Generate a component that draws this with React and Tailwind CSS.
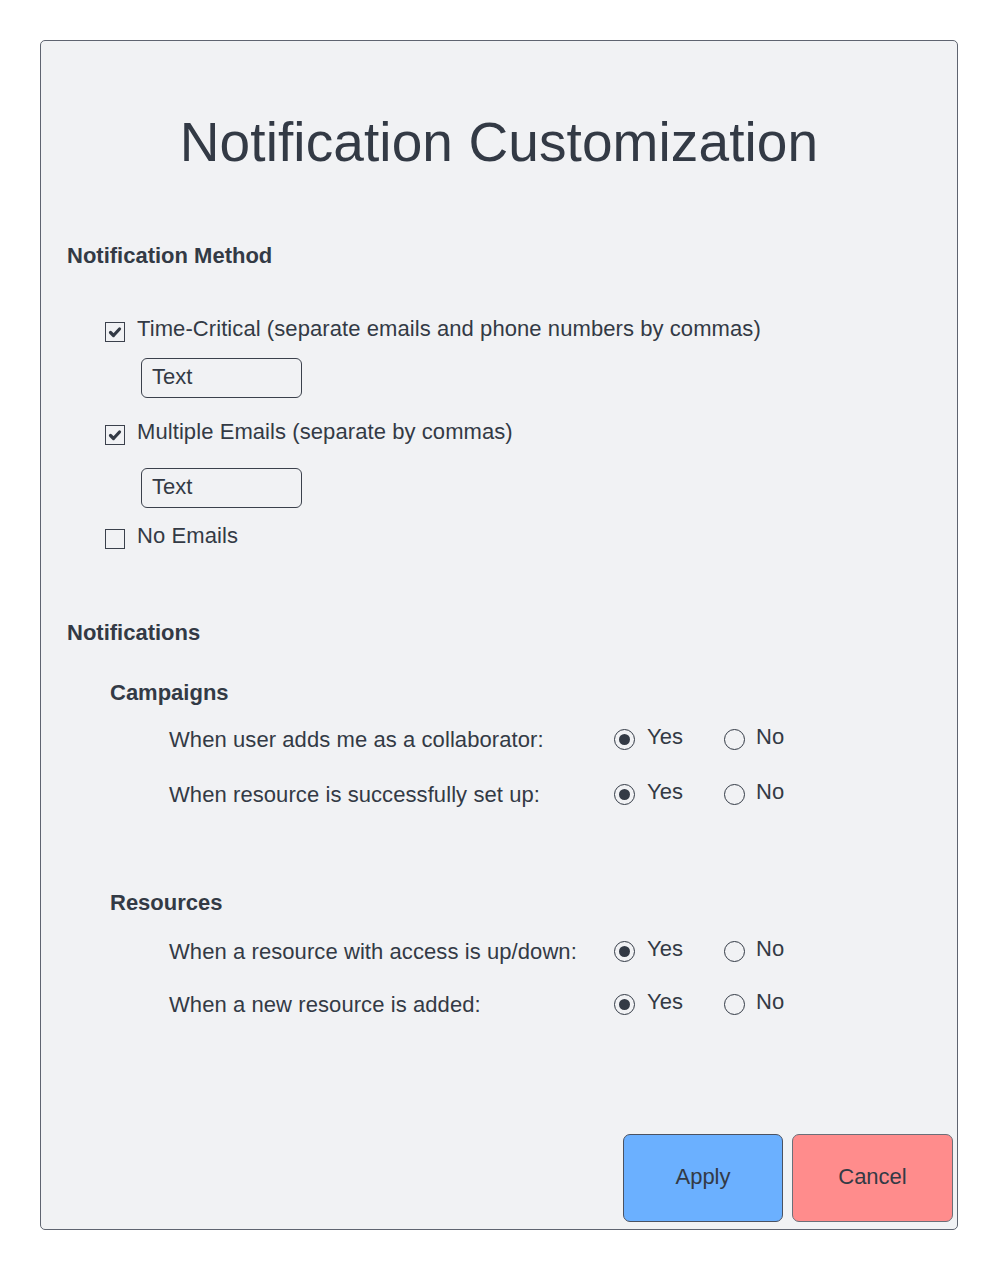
import React, { useState } from "react";

const Checkbox = ({ checked, onClick }) => (
  <button
    type="button"
    onClick={onClick}
    className="w-[20px] h-[20px] border border-[#3b414c] bg-[#f1f2f4] flex items-center justify-center shrink-0"
  >
    {checked && (
      <svg width="16" height="16" viewBox="0 0 16 16">
        <path
          d="M3.5 8.5 L6.5 11.5 L12.5 5"
          fill="none"
          stroke="#333a45"
          strokeWidth="3.2"
          strokeLinecap="round"
          strokeLinejoin="round"
        />
      </svg>
    )}
  </button>
);

const Radio = ({ checked, onClick }) => (
  <button
    type="button"
    onClick={onClick}
    className="w-[21px] h-[21px] rounded-full border-[1.5px] border-[#333a45] bg-[#f1f2f4] flex items-center justify-center shrink-0"
  >
    {checked && <span className="w-[11px] h-[11px] rounded-full bg-[#333a45]" />}
  </button>
);

const CheckRow = ({ label, checked, onClick, className }) => (
  <div className={`flex items-center ml-[38px] ${className}`}>
    <div className="mt-[5px]">
      <Checkbox checked={checked} onClick={onClick} />
    </div>
    <span className="ml-[12px] leading-[26px] tracking-[0.08px]">{label}</span>
  </div>
);

const TextBox = ({ className }) => (
  <div
    className={`ml-[74px] w-[161px] h-[40px] border border-[#3b414c] rounded-[6px] pl-[10px] pb-[3px] flex items-center leading-[26px] ${className}`}
  >
    Text
  </div>
);

const ChoiceRow = ({ label, value, onChange, className }) => (
  <div className={`flex ml-[102px] ${className}`}>
    <span className="w-[445px] leading-[26px] tracking-[0.08px]">{label}</span>
    <div className="flex items-start w-[110px]">
      <div className="mt-[2px]">
        <Radio checked={value} onClick={() => onChange(true)} />
      </div>
      <span className="ml-[12px] leading-[26px] -mt-[3px]">Yes</span>
    </div>
    <div className="flex items-start">
      <div className="mt-[2px]">
        <Radio checked={!value} onClick={() => onChange(false)} />
      </div>
      <span className="ml-[11px] leading-[26px] -mt-[3px]">No</span>
    </div>
  </div>
);

const App = () => {
  const [timeCritical, setTimeCritical] = useState(true);
  const [multiple, setMultiple] = useState(true);
  const [noEmails, setNoEmails] = useState(false);
  const [choices, setChoices] = useState([true, true, true, true]);

  const setChoice = (i) => (v) =>
    setChoices((prev) => prev.map((c, j) => (j === i ? v : c)));

  return (
    <div className="w-full min-h-[1271px] bg-white pt-[40px] pl-[40px] font-['Liberation_Sans',Arial,sans-serif] text-[22px] text-[#333a45]">
      <div className="w-[918px] h-[1190px] border border-[#5f6470] rounded-[5px] bg-[#f1f2f4] flex flex-col pl-[26px]">
        {/* Title */}
        <h1 className="mt-[69px] -ml-[26px] text-center text-[55px] leading-[64px] tracking-[0.1px]">
          Notification Customization
        </h1>

        {/* Notification Method */}
        <h2 className="mt-[69px] font-bold leading-[26px]">Notification Method</h2>

        <CheckRow
          className="mt-[47px]"
          label="Time-Critical (separate emails and phone numbers by commas)"
          checked={timeCritical}
          onClick={() => setTimeCritical(!timeCritical)}
        />
        <TextBox className="mt-[16px]" />

        <CheckRow
          className="mt-[21px]"
          label="Multiple Emails (separate by commas)"
          checked={multiple}
          onClick={() => setMultiple(!multiple)}
        />
        <TextBox className="mt-[23px]" />

        <CheckRow
          className="mt-[15px]"
          label="No Emails"
          checked={noEmails}
          onClick={() => setNoEmails(!noEmails)}
        />

        {/* Notifications */}
        <h2 className="mt-[71px] font-bold leading-[26px]">Notifications</h2>

        <h3 className="mt-[34px] ml-[43px] font-bold leading-[26px]">Campaigns</h3>
        <ChoiceRow
          className="mt-[21px]"
          label="When user adds me as a collaborator:"
          value={choices[0]}
          onChange={setChoice(0)}
        />
        <ChoiceRow
          className="mt-[29px]"
          label="When resource is successfully set up:"
          value={choices[1]}
          onChange={setChoice(1)}
        />

        <h3 className="mt-[82px] ml-[43px] font-bold leading-[26px]">Resources</h3>
        <ChoiceRow
          className="mt-[23px]"
          label="When a resource with access is up/down:"
          value={choices[2]}
          onChange={setChoice(2)}
        />
        <ChoiceRow
          className="mt-[27px]"
          label="When a new resource is added:"
          value={choices[3]}
          onChange={setChoice(3)}
        />

        {/* Buttons */}
        <div className="mt-auto mb-[7px] mr-[4px] flex justify-end gap-[9px]">
          <button
            type="button"
            className="w-[160px] h-[88px] pb-[4px] rounded-[7px] border border-[#4b5261] bg-[#6bb0ff] text-[22px] text-[#333a45]"
          >
            Apply
          </button>
          <button
            type="button"
            className="w-[161px] h-[88px] pb-[4px] rounded-[7px] border border-[#6b6f78] bg-[#ff8c8c] text-[22px] text-[#333a45]"
          >
            Cancel
          </button>
        </div>
      </div>
    </div>
  );
};

export default App;
